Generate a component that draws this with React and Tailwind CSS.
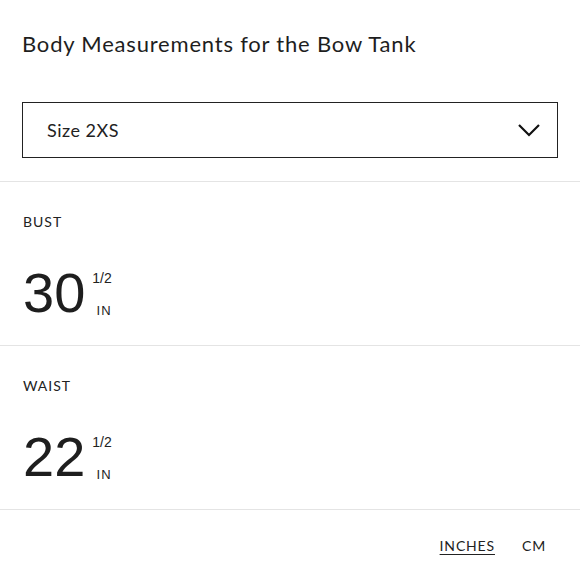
import React from "react";

function Measure({ label, value }) {
  return (
    <div className="border-b border-[#e4e4e4] px-[23px] pt-[29px] h-[164px]">
      <div className="text-[14px] leading-[21px] tracking-[0.07em] text-[#222]" style={{ fontFamily: "Lato, sans-serif" }}>{label}</div>
      <div className="mt-[39px] h-[44px] flex items-stretch" style={{ fontFamily: "'Liberation Sans', Arial, sans-serif" }}>
        <span className="text-[56px] leading-[44px] text-[#1e1e1e]">{value}</span>
        <div className="ml-[7px] -mb-[3px] flex flex-col items-center justify-between text-[14px] text-[#222]">
          <span className="leading-[14px]">1/2</span>
          <span className="leading-[14px] text-[13px] tracking-[0.08em] pl-[4px]">IN</span>
        </div>
      </div>
    </div>
  );
}

export default function App() {
  return (
    <div className="w-[580px] h-[580px] bg-white text-[#222]" style={{ fontFamily: "Lato, sans-serif" }}>
      <div className="px-[22px] pt-[29px]">
        <h1 className="text-[22px] leading-[30px] tracking-[0.8px] font-normal text-[#1e1e1e]">Body Measurements for the Bow Tank</h1>
        <div className="mt-[43px] h-[56px] border-[1.5px] border-[#222] flex items-center justify-between pl-[24px] pr-[16px]">
          <span className="text-[18px] tracking-[0.5px]">Size 2XS</span>
          <svg width="24" height="14" viewBox="0 0 24 14" fill="none" stroke="#111" strokeWidth="2.2">
            <path d="M2 2 L12 12 L22 2" />
          </svg>
        </div>
      </div>
      <div className="mt-[23px] border-t border-[#e4e4e4]">
        <Measure label="BUST" value="30" />
        <Measure label="WAIST" value="22" />
      </div>
      <div className="flex justify-end items-center gap-[27px] pr-[34px] pt-[25px] text-[14px] tracking-[0.06em]">
        <span className="underline underline-offset-[3px]">INCHES</span>
        <span>CM</span>
      </div>
    </div>
  );
}
